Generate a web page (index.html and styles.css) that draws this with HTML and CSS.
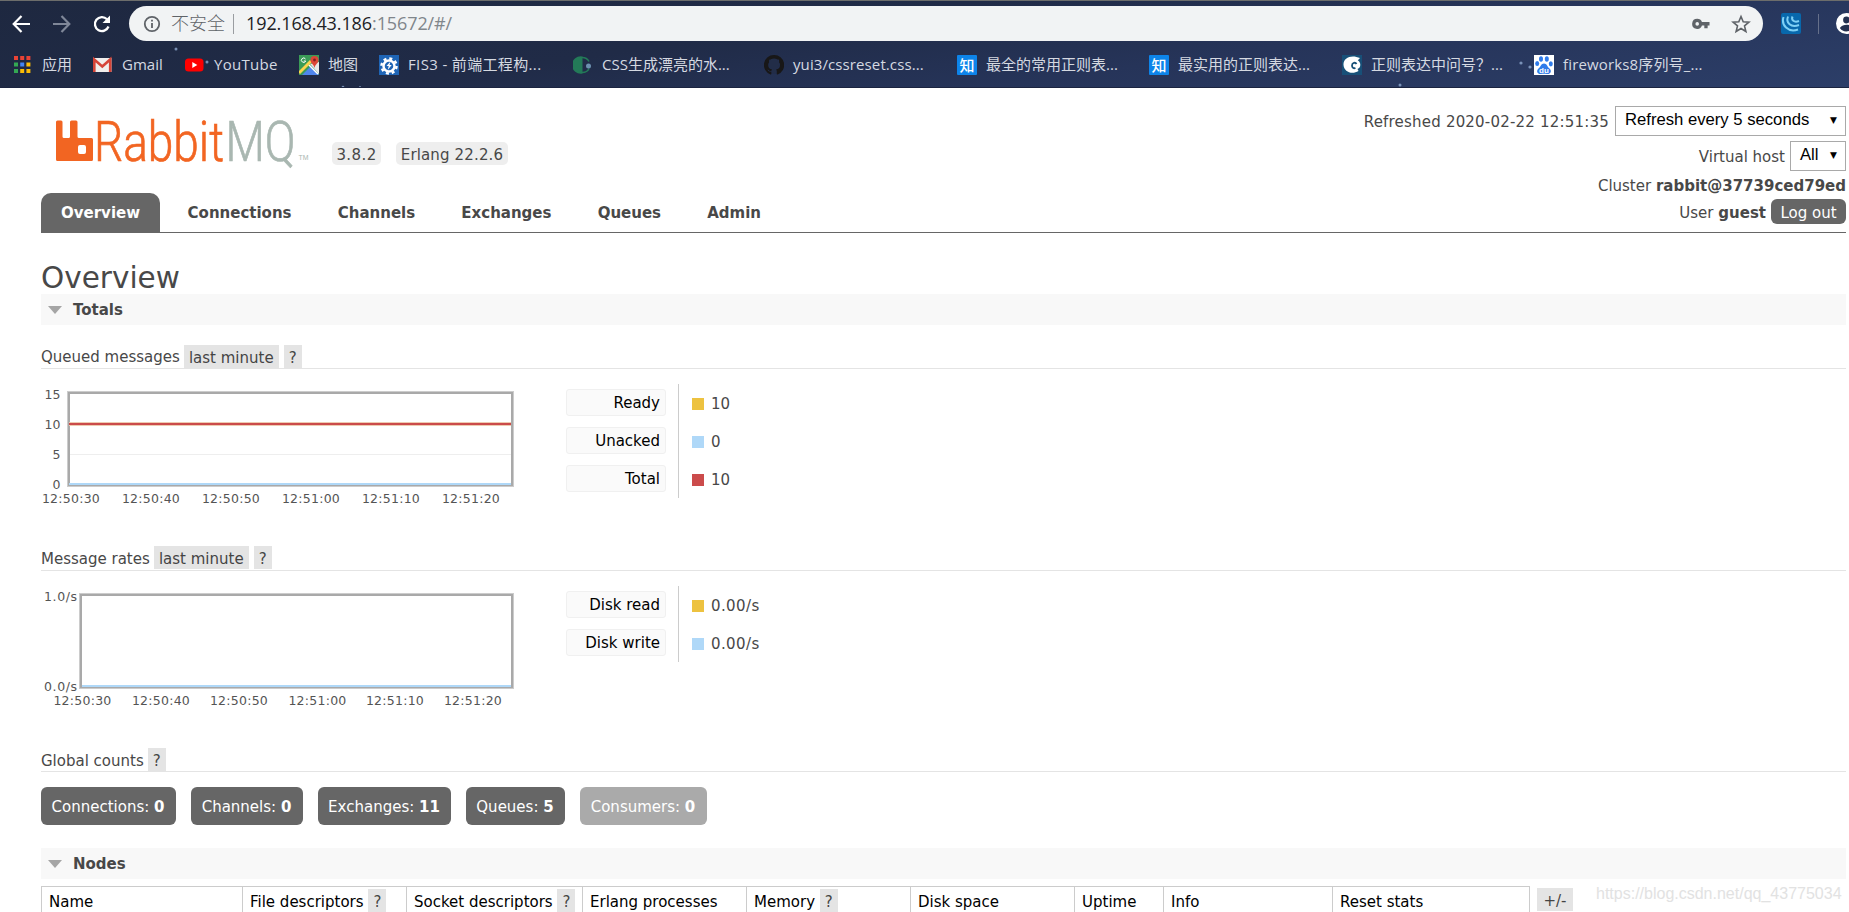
FILE: index.html
```html
<!DOCTYPE html>
<html lang="zh-CN">
<head>
<meta charset="utf-8">
<title>RabbitMQ Management</title>
<link rel="stylesheet" href="styles.css">
</head>
<body>
<header class="browser">
  <div class="toolbar">
    <svg class="nav-icons" width="116" height="36" viewBox="0 0 116 36" fill="none">
      <g stroke="#fff" stroke-width="2.2"><path d="M30 18H14M21.5 10L13.7 18L21.5 26"/></g>
      <g stroke="#7f8798" stroke-width="2.2"><path d="M53 18H69M61.500 10L69.300 18L61.500 26"/></g>
      <path d="M107 13.200A7 7 0 1 0 108.500 20.500" stroke="#fff" stroke-width="2.300"/><path d="M110 9.500V17H102.500Z" fill="#fff"/>
    </svg>
    <div class="omnibox">
      <svg class="info" width="18" height="18" viewBox="0 0 18 18"><circle cx="9" cy="9" r="7.200" fill="none" stroke="#5f6368" stroke-width="1.800"/><path d="M8.100 8h1.800v5H8.100zM8.100 4.800h1.800v1.800H8.100z" fill="#5f6368"/></svg>
      <span class="unsafe">不安全</span><span class="divider"></span>
      <span class="url"><b>192.168.43.186</b>:15672/#/</span>
      <svg class="key" width="18" height="12" viewBox="0 0 19 12"><path fill="#5f6368" fill-rule="evenodd" d="M5.500 0.500a5.300 5.300 0 1 0 5 7H13v3h3.500v-3H18.500V4H10.500A5.300 5.300 0 0 0 5.500 .5zM5.500 4a1.900 1.900 0 1 1 0 3.800a1.900 1.900 0 0 1 0-3.800z"/></svg>
      <svg class="star" width="20" height="20" viewBox="0 0 20 20"><path d="M10 2.500l2.200 5.300 5.700.4-4.400 3.700 1.400 5.600L10 14.500l-4.900 3 1.400-5.600L2.100 8.200l5.700-.4z" fill="none" stroke="#5f6368" stroke-width="1.600"/></svg>
    </div>
    <svg class="ext" width="20" height="21" viewBox="0 0 20 21"><rect width="20" height="21" rx="2" fill="#0868ac"/><g fill="none" stroke="#7fd0f5" stroke-width="2"><path d="M2.500 4C0 12 7 20 17 16.500"/><path d="M7 3.500C4.500 10 10 15 18 12"/><path d="M11.500 3.500C10 7 13 10 18 8"/></g></svg>
    <span class="tool-divider"></span>
    <svg class="avatar" width="13" height="21" viewBox="0 0 13 21"><circle cx="10.500" cy="10.500" r="10.500" fill="#fff"/><circle cx="10.500" cy="7" r="3.400" fill="#24304f"/><path d="M3.800 15C6 11.700 10 11.500 13 12V18C9 19 6 18 3.800 15z" fill="#24304f"/></svg>
  </div>
  <nav class="bookmarks">
    <a class="bm w80"><svg viewBox="0 0 20 20"><g fill="#ea4335"><path d="M1 1h4v4H1zM7.200 1h4v4h-4zM13.400 1h4v4h-4z"/></g><path fill="#34a853" d="M1 7.500h4v4H1zM1 14h4v4H1z"/><path fill="#4285f4" d="M7.200 7.500h4v4h-4z"/><path fill="#fbbc05" d="M13.400 7.500h4v4h-4zM7.200 14h4v4h-4zM13.400 14h4v4h-4z"/></svg><span>应用</span></a>
    <a class="bm w92"><svg viewBox="0 0 20 20"><path fill="#f1efec" d="M0 3h18.500v14H0z"/><path d="M1.300 17V4.500L9.300 11.500L17.200 4.500V17" fill="none" stroke="#d64538" stroke-width="2.600"/></svg><span>Gmail</span></a>
    <a class="bm w114"><svg viewBox="0 0 20 20"><rect y="3.500" width="18.500" height="13" rx="3.500" fill="#f00"/><path fill="#fff" d="M7.300 7v6l5-3z"/></svg><span class="yt">YouTube</span></a>
    <a class="bm w80"><svg viewBox="0 0 20 20"><path fill="#3b9b57" d="M0 0h20v20H0z"/><path fill="#4f86ec" d="M3 20L12 11l8 9z"/><path fill="#e8e8e8" d="M11 9l9-2v12z"/><path d="M0 18L12 6" stroke="#fbd44b" stroke-width="3"/><path d="M10 10l9 9" stroke="#fff" stroke-width="1.500"/><path fill="#dc4637" d="M15.500 13c-.7-4-4-4.500-4-8a4 4 0 0 1 8 0c0 3.500-3.300 4-4 8z"/><circle cx="15.500" cy="5" r="1.400" fill="#7d2220"/><path d="M6.500 4A2.200 2.200 0 1 0 6.700 6H4.800" fill="none" stroke="#fff" stroke-width="1"/></svg><span>地图</span></a>
    <a class="bm w194"><svg viewBox="0 0 20 20"><path fill="#1f65b6" d="M0 0h20v20H0z"/><circle cx="10" cy="11" r="5.500" fill="none" stroke="#fff" stroke-width="2.500"/><circle cx="10" cy="11" r="7.500" fill="none" stroke="#fff" stroke-width="2.500" stroke-dasharray="3 2.900"/><path fill="#fff" d="M11.500 6.500L7.500 11h2.200l-1 4 4-5h-2.200z"/></svg><span class="fis">FIS3 - 前端工程构...</span></a>
    <a class="bm w191"><svg viewBox="0 0 20 20"><path fill="#237a58" d="M9.500 1.500a8.700 8.700 0 1 0 0 17z"/><path d="M9 2.500c4 0 6 2 7 4M9 17.500c4 0 6-1.500 7-4" fill="none" stroke="#237a58" stroke-width="1.500"/><circle cx="15.500" cy="11" r="2.500" fill="#6c91b0"/></svg><span>CSS生成漂亮的水...</span></a>
    <a class="bm w193"><svg viewBox="0 0 20 20"><path fill="#181717" d="M10 0a10 10 0 0 0-3.500 19.400c.6.200.9-.2.900-.6v-2.200c-3 .6-3.500-1.300-4-2l1.300.3c1 1.500 2.200 1.200 2.800.9.100-.6.400-1 .7-1.300-2.300-.3-4-1.400-4-4.500 0-1.100.4-2 1-2.700-.2-.9-.1-1.800.2-2.700 1 0 1.900.5 2.700 1.100a9 9 0 0 1 4 0c.8-.6 1.700-1.100 2.700-1.100.3.900.4 1.800.2 2.700.6.700 1 1.600 1 2.700 0 3.100-1.700 4.200-4 4.500.5.400.7 1 .7 2v2.300c0 .4.300.8.900.6A10 10 0 0 0 10 0z"/><path fill="#222d48" d="M6.800 4.200c2-1 4.500-1 6.500 0 3.500 4 2 9-1.300 9.500v5H8v-5C4.700 13 3.500 8 6.800 4.200z"/></svg><span class="yui">yui3/cssreset.css...</span></a>
    <a class="bm w192"><i class="zhi">知</i><span>最全的常用正则表...</span></a>
    <a class="bm w193"><i class="zhi">知</i><span>最实用的正则表达...</span></a>
    <a class="bm w192"><svg viewBox="0 0 20 20"><path fill="#185078" d="M0 0h20v20H0z"/><path fill="#fff" d="M18 3C9-1 1 3 1.500 10S10 20 16.500 16l-1-2c2.500-1 3.300-3 2.500-6-1-3-4-3.500-6.500-3-4 1-4.500 7-1 9 2 1 4.500 0 5-2.500.3-3-2-4-3.500-3.500-2 1-1.500 4 .8 3.800-1.500 1.500-3.800 0-3.800-2 0-2.500 3-4 5.500-3z"/><path d="M14.500 9c-1-2-4.500-1.500-4.500 1.500 0 2 1.500 3.300 3.500 2.500" fill="none" stroke="#185078" stroke-width="1.800"/></svg><span>正则表达中问号？...</span></a>
    <a class="bm"><svg viewBox="0 0 20 20"><path fill="#fff" d="M0 0h20v20H0z"/><g fill="#2f7bea"><ellipse cx="7" cy="4" rx="2" ry="2.800"/><ellipse cx="12.800" cy="4" rx="2" ry="2.800"/><ellipse cx="3.200" cy="8.500" rx="2" ry="2.600"/><ellipse cx="16.800" cy="8.800" rx="2" ry="2.600"/><path d="M10 8.500c3 0 3 3 5.500 5 3 3 .5 6-2.500 5.500-2-.5-4-.5-6 0-3 .5-5.500-2.500-2.500-5.500C7 11.500 7 8.500 10 8.500z"/></g><text x="5" y="17.500" class="du">du</text></svg><span class="fw">fireworks8序列号_...</span></a>
  </nav>
  <svg class="stars" width="1849" height="88"><g fill="#8fa9cf"><circle cx="176" cy="48" r="1.500"/><circle cx="207" cy="61" r="1.500"/><circle cx="343" cy="86" r="1.300"/><circle cx="360" cy="86" r="1"/><circle cx="1400" cy="84" r="1.500"/><circle cx="1521" cy="62" r="1.600"/><circle cx="1530" cy="66" r="1.600"/></g></svg>
</header>

<main class="page">
  <div class="head">
    <div class="brand">
      <svg class="logo" width="270" height="72" viewBox="0 0 270 72">
        <path fill="#f26522" fill-rule="evenodd" d="M16 15q0-1.500 1.500-1.500H21q1.500 0 1.500 1.500V29.500q0 1.500 1.500 1.500h4.500q1.500 0 1.500-1.500V15q0-1.500 1.500-1.500H36q1.500 0 1.500 1.500V29.500q0 1.500 1.500 1.500H51.500q1.500 0 1.500 1.500V52.500q0 1.500-1.500 1.500H17.500q-1.500 0-1.500-1.500zM38 40v5q0 2 2 2h4q2 0 2-2V40q0-2-2-2H40q-2 0-2 2z"/>
        <text class="logo-text orange" x="54" y="53.500" textLength="130" lengthAdjust="spacingAndGlyphs">Rabbit</text>
        <text class="logo-text gray" x="185.500" y="53.500" textLength="70" lengthAdjust="spacingAndGlyphs">MQ</text>
        <text class="tm" x="258.500" y="53" textLength="10" lengthAdjust="spacingAndGlyphs">TM</text>
      </svg>
      <span class="version v1">3.8.2</span><span class="version v2">Erlang 22.2.6</span>
    </div>
    <nav class="tabs">
      <a class="tab active">Overview</a><a class="tab">Connections</a><a class="tab">Channels</a><a class="tab">Exchanges</a><a class="tab">Queues</a><a class="tab">Admin</a>
    </nav>
    <div class="status">
      <div class="row r1"><span class="t refreshed">Refreshed 2020-02-22 12:51:35</span><span class="select wide">Refresh every 5 seconds<i>▼</i></span></div>
      <div class="row r2"><span class="t">Virtual host</span><span class="select">All<i>▼</i></span></div>
      <div class="row r3"><span class="t">Cluster <b>rabbit@37739ced79ed</b></span></div>
      <div class="row r4"><span class="t">User <b>guest</b></span><span class="logout">Log out</span></div>
    </div>
  </div>

  <h1>Overview</h1>
  <h2><i class="tri"></i>Totals</h2>

  <h3 class="q">Queued messages <span class="chip range">last minute</span><span class="chip">?</span></h3>
  <section class="chart-row">
    <svg class="chart" width="480" height="126">
      <g class="axis end"><text x="19.500" y="15">15</text><text x="19.500" y="45">10</text><text x="19.500" y="75">5</text><text x="19.500" y="105">0</text></g>
      <path d="M28 70.500H470" stroke="#eee"/>
      <rect x="27.500" y="8.500" width="444" height="93" class="frame-edge"/><rect x="28" y="9" width="443" height="92" class="frame"/>
      <path d="M28 40H470" stroke="#eecbb0" stroke-width="4"/><path d="M28 40H470" stroke="#cb4b4b" stroke-width="2"/>
      <path d="M28 100H470" stroke="#afd8f8" stroke-width="2"/>
      <g class="axis mid"><text x="30" y="119">12:50:30</text><text x="110" y="119">12:50:40</text><text x="190" y="119">12:50:50</text><text x="270" y="119">12:51:00</text><text x="350" y="119">12:51:10</text><text x="430" y="119">12:51:20</text></g>
    </svg>
    <div class="legend">
      <div class="keys"><span>Ready</span><span>Unacked</span><span>Total</span></div>
      <div class="vals"><span><i class="yellow"></i>10</span><span><i class="blue"></i>0</span><span><i class="red"></i>10</span></div>
    </div>
  </section>

  <h3 class="m">Message rates <span class="chip range">last minute</span><span class="chip">?</span></h3>
  <section class="chart-row">
    <svg class="chart" width="480" height="126">
      <g class="axis rates"><text x="3" y="15">1.0/s</text><text x="3" y="105">0.0/s</text></g>
      <rect x="39.500" y="8.500" width="432" height="93" class="frame-edge"/><rect x="40" y="9" width="431" height="92" class="frame"/>
      <path d="M41 100H470" stroke="#afd8f8" stroke-width="2"/>
      <g class="axis mid"><text x="41.500" y="119">12:50:30</text><text x="120" y="119">12:50:40</text><text x="198" y="119">12:50:50</text><text x="276.500" y="119">12:51:00</text><text x="354" y="119">12:51:10</text><text x="432" y="119">12:51:20</text></g>
    </svg>
    <div class="legend">
      <div class="keys"><span>Disk read</span><span>Disk write</span></div>
      <div class="vals rate"><span><i class="yellow"></i>0.00/s</span><span><i class="blue"></i>0.00/s</span></div>
    </div>
  </section>

  <h3 class="g">Global counts <span class="chip">?</span></h3>
  <div class="counts">
    <span class="c1">Connections: <b>0</b></span><span class="c2">Channels: <b>0</b></span><span class="c3">Exchanges: <b>11</b></span><span class="c4">Queues: <b>5</b></span><span class="c5">Consumers: <b>0</b></span>
  </div>

  <h2><i class="tri"></i>Nodes</h2>
  <div class="nodes">
    <div class="cols">
      <span>Name</span><span>File descriptors <i class="chip">?</i></span><span>Socket descriptors <i class="chip">?</i></span><span>Erlang processes</span><span>Memory <i class="chip">?</i></span><span>Disk space</span><span>Uptime</span><span>Info</span><span>Reset stats</span>
    </div>
    <span class="chip plus">+/-</span>
  </div>
</main>
<div class="watermark">https://blog.csdn.net/qq_43775034</div>
</body>
</html>
```
FILE: styles.css
```css
* { box-sizing: border-box; }
html, body { height: 912px; overflow: hidden; }
body { margin: 0; background: #fff; color: #484848; font: 15px/18px "DejaVu Sans", sans-serif; position: relative; }
i { font-style: normal; }

/* browser chrome */
.browser { position: relative; height: 88px; overflow: hidden; background: linear-gradient(172deg, #1e2840 0%, #202b47 40%, #263459 65%, #2c3e68 100%); border-top: 1px solid #6c6d6b; border-bottom: 1px solid #1b2440; font-family: "Open Sans", "Noto Sans CJK SC", sans-serif; }
.toolbar { display: flex; align-items: center; height: 36px; margin-top: 5px; }
.nav-icons { flex: none; margin-right: 13px; }
.omnibox { display: flex; align-items: center; width: 1634px; height: 35px; border-radius: 18px; background: #f1f3f4; color: #5f6368; font-size: 18px; padding-left: 14px; margin-top: -1px; }
.unsafe { margin: -3px 0 0 10px; width: 62px; font-family: "Noto Sans CJK SC", sans-serif; font-weight: 300; }
.divider { width: 1px; height: 20px; background: #9a9da1; margin-right: 12px; }
.url { flex: 1; color: #80868b; letter-spacing: -.1px; margin-top: -1px; }
.url b { color: #202124; font-weight: 400; }
.star { margin: 0 12px 0 21px; }
.ext { margin: -2px 0 0 18px; }
.avatar { margin-top: -2px; }
.tool-divider { width: 1px; height: 20px; background: #66708a; margin: 0 17px 0 17px; }
.bookmarks { display: flex; height: 46px; padding-left: 13px; align-items: center; color: #d5d9e1; font-size: 15px; }
.bm { display: flex; align-items: center; gap: 9px; white-space: nowrap; }
.bm span { margin-top: -2px; }
.yt { letter-spacing: .3px; } .fis { letter-spacing: .35px; } .yui { letter-spacing: .1px; } .fw { letter-spacing: .15px; }
.bm svg, .zhi { width: 20px; height: 20px; flex: none; }
.zhi { background: #0d84ea; color: #fff; font: 500 15px/20px "Noto Sans CJK SC", sans-serif; text-align: center; border-radius: 1px; }
.w80 { width: 80px; } .w92 { width: 92px; } .w114 { width: 114px; } .w194 { width: 194px; }
.w191 { width: 191px; } .w192 { width: 192px; } .w193 { width: 193px; }
.du { font: bold 8px "Liberation Sans", sans-serif; fill: #fff; }
.stars { position: absolute; left: 0; top: 0; opacity: .8; }

/* page */
.page { margin: 0 3px 0 41px; height: 824px; overflow: hidden; }
.head { display: grid; grid-template: 105px 40px / 1fr 500px; border-bottom: 1px solid #666; height: 145px; }
.brand { display: flex; align-items: flex-start; padding-top: 19px; }
.logo { margin-left: -1px; overflow: visible; }
.logo-text { font: 300 56px "Roboto", sans-serif; stroke-width: .7px; }
.orange { fill: #f26522; stroke: #f26522; } .gray { fill: #a9b7b1; stroke: #a9b7b1; }
.tm { font: 8px "Liberation Sans", sans-serif; fill: #a9b7b1; }
.version { background: #eee; border-radius: 5px; height: 23px; line-height: 26px; text-align: center; margin-top: 35px; white-space: nowrap; letter-spacing: .15px; }
.v1 { width: 49px; margin-left: 22px; letter-spacing: .4px; } .v2 { width: 112px; margin-left: 15px; }
.tabs { display: flex; grid-row: 2; }
.tab { font-weight: 700; height: 40px; line-height: 41px; padding: 0 20px; margin-right: 6.200px; }
.tab.active { background: #666; color: #fff; border-radius: 10px 10px 0 0; margin-right: 7.500px; }
.status { grid-column: 2; grid-row: 1 / 3; padding-top: 18px; }
.row { display: flex; justify-content: flex-end; align-items: center; gap: 6px; white-space: nowrap; }
.t { padding-top: 2px; }
.refreshed { letter-spacing: .2px; }
.r1 { height: 30px; margin-bottom: 5px; } .r2 { height: 30px; gap: 5px; } .r3 { height: 28px; } .r4 { height: 25px; gap: 5px; }
.select { display: flex; justify-content: space-between; align-items: center; width: 56px; height: 30px; border: 1px solid #a9a9a9; padding: 0 8px 2px 9px; color: #000; font: 16.670px "Liberation Sans", sans-serif; }
.wide { width: 231px; }
.select i { font: 9px "DejaVu Sans", sans-serif; }
.logout { background: #666; color: #fff; width: 75px; height: 25px; line-height: 28px; text-align: center; border-radius: 6px; }
h1 { font-weight: 400; font-size: 29.500px; line-height: 36px; height: 34px; margin: 27px 0 0; }
h2 { display: flex; align-items: center; background: #f8f8f8; font-size: 15px; height: 31px; margin: 0; padding-left: 7px; }
.tri { border: 7px solid transparent; border-top: 8px solid #a5a5a5; border-bottom: 0; margin-right: 11px; }
h3 { display: flex; font-weight: 400; font-size: 15px; height: 24px; line-height: 25px; border-bottom: 1px solid #e4e4e4; margin: 20px 0 0; }
.chip { background: #e4e4e4; height: 23px; line-height: 26px; width: 18px; text-align: center; margin-left: 5px; color: #444; display: inline-block; }
h3 .chip:first-child { margin-left: 4px; }
.range { width: 95px; }
.chart-row { display: flex; height: 157px; padding-top: 15px; }
.m, .g { line-height: 26px; }
.m { height: 25px; }
.chart { margin-right: 45px; flex: none; }
.axis { font: 12.500px "DejaVu Sans", sans-serif; fill: #545454; }
.end { text-anchor: end; } .mid { text-anchor: middle; letter-spacing: .25px; } .rates { letter-spacing: .6px; }
.frame { fill: none; stroke: #a9a9a9; stroke-width: 2; } .frame-edge { fill: none; stroke: #ccc; stroke-width: 3; }
.legend { display: flex; align-items: flex-start; }
.keys { padding: 5px 12px 6px 0; border-right: 1px solid #ccc; display: flex; flex-direction: column; gap: 11px; }
.keys span { width: 100px; height: 27px; border: 1px solid #f0f0f0; border-radius: 3px; background: #fafafa; color: #000; text-align: right; line-height: 27px; padding-right: 5px; }
.vals { padding: 1px 0 0 13px; }
.vals span { display: flex; align-items: center; height: 38px; }
.vals i { width: 12px; height: 12px; margin-right: 7px; }
.rate { letter-spacing: .4px; }
.yellow { background: #edc240; } .blue { background: #afd8f8; } .red { background: #cb4b4b; }
.counts { display: flex; gap: 15px; margin: 15px 0 23px; }
.counts span { height: 38px; line-height: 41px; background: #666; color: #fff; border-radius: 6px; text-align: center; white-space: pre; padding-right: 1px; }
.c1 { width: 135px; } .c2 { width: 112px; } .c3 { width: 133px; } .c4 { width: 99px; } .counts .c5 { width: 127px; background: #aaa; }
.nodes { display: flex; padding-top: 7px; }
.cols { display: grid; grid-template-columns: 201px 164px 176px 164px 164px 164px 89px 169px 197px; border: 1px solid #ccc; border-width: 1px 0 0 1px; height: 40px; color: #000; width: 1489px; }
.cols > span { border-right: 1px solid #ccc; padding: 2px 0 0 7px; line-height: 26px; white-space: nowrap; }
.cols .chip { margin-left: 0; }
.plus { width: 36px; margin: 2px 0 0 7px; }
.watermark { position: absolute; left: 1596px; top: 884px; font: 16px/20px "Liberation Sans", sans-serif; color: #e2e2e2; }
```
